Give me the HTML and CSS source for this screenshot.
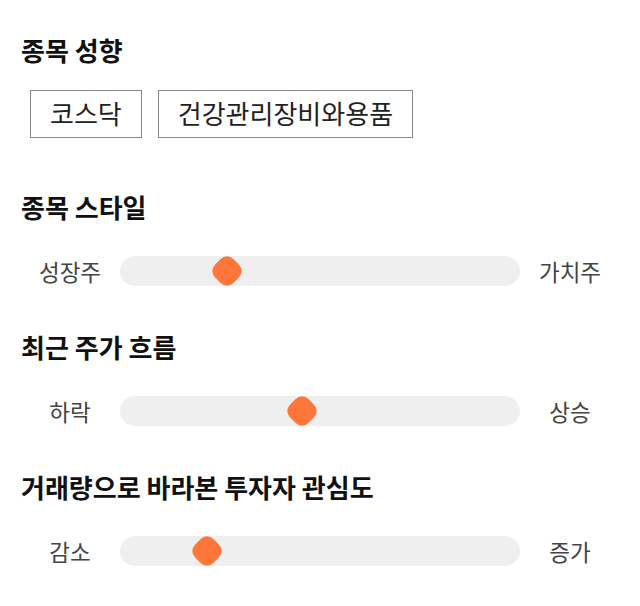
FILE: index.html
```html
<!DOCTYPE html>
<html>
<head>
  <title>종목 분석</title>
  <link rel="stylesheet" href="styles.css">
</head>
<body>
  <div class="section tags-section">
    <h2>종목 성향</h2>
    <div class="tags">
      <span class="tag">코스닥</span>
      <span class="tag">건강관리장비와용품</span>
    </div>
  </div>

  <div class="section">
    <h2>종목 스타일</h2>
    <div class="slider-row">
      <span class="label">성장주</span>
      <div class="track"><span class="thumb" style="left: 26.75%"></span></div>
      <span class="label">가치주</span>
    </div>
  </div>

  <div class="section">
    <h2>최근 주가 흐름</h2>
    <div class="slider-row">
      <span class="label">하락</span>
      <div class="track"><span class="thumb" style="left: 45.5%"></span></div>
      <span class="label">상승</span>
    </div>
  </div>

  <div class="section">
    <h2>거래량으로 바라본 투자자 관심도</h2>
    <div class="slider-row">
      <span class="label">감소</span>
      <div class="track"><span class="thumb" style="left: 21.75%"></span></div>
      <span class="label">증가</span>
    </div>
  </div>
</body>
</html>
```

FILE: styles.css
```css
body {
  font-family: "Noto Sans CJK KR", "Noto Sans", sans-serif;
  margin: 0;
  padding: 35px 20px 0;
  background-color: #fff;
  color: #111;
}

.section {
  margin-bottom: 45px;
}

.section h2 {
  font-size: 26px;
  font-weight: bold;
  line-height: 30px;
  margin: 0 0 33px 1px;
  color: #111;
}

.tags-section {
  margin-bottom: 54px;
}

.tags-section h2 {
  margin-bottom: 25px;
}

.tags {
  display: flex;
  gap: 16px;
  margin-left: 10px;
}

.tag {
  border: 1px solid #888;
  height: 46px;
  line-height: 44px;
  padding: 0 19px;
  font-size: 26px;
  color: #222;
}

.slider-row {
  display: flex;
  align-items: center;
  height: 32px;
}

.label {
  width: 100px;
  text-align: center;
  font-size: 22.5px;
  color: #444;
}

.track {
  flex: 1;
  position: relative;
  height: 30px;
  border-radius: 15px;
  background-color: #efefef;
}

.thumb {
  position: absolute;
  top: 50%;
  width: 26px;
  height: 26px;
  border-radius: 9px;
  background-color: #ff763b;
  transform: translate(-50%, -50%) rotate(45deg);
}
```
